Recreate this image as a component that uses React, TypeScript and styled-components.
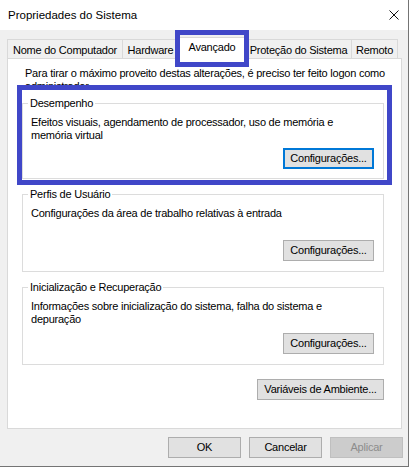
import React from 'react';
import styled, { createGlobalStyle, css } from 'styled-components';

const Global = createGlobalStyle`
  html, body { margin: 0; padding: 0; background: #ffffff; }
  body { font-family: "Liberation Sans", Arial, sans-serif; }
`;

const Window = styled.div`
  position: relative;
  box-sizing: border-box;
  width: 409px;
  height: 467px;
  border-right: 1px solid #747474;
  border-bottom: 1px solid #747474;
  background: #f0f0f0;
  display: flex;
  flex-direction: column;
  font-family: "Liberation Sans", Arial, sans-serif;
  font-size: 11px;
  letter-spacing: -0.23px;
  line-height: 13px;
  color: #000;
`;

const TitleBar = styled.div`
  box-sizing: border-box;
  height: 30px;
  flex: none;
  background: #ffffff;
  display: flex;
  align-items: center;
  justify-content: space-between;
  padding: 0 9px 0 8px;
  font-size: 11.5px;
  letter-spacing: 0;
`;

const CloseIcon = () => (
  <svg width="10" height="10" viewBox="0 0 10 10" style={{ display: 'block' }}>
    <path d="M0.5 0.5 L9.5 9.5 M9.5 0.5 L0.5 9.5" stroke="#111" strokeWidth="1" fill="none" />
  </svg>
);

const Body = styled.div`
  flex: 1;
  display: flex;
  flex-direction: column;
  padding: 9px 0 0 7px;
`;

const TabStrip = styled.div`
  display: flex;
  align-items: flex-end;
  height: 19px;
  position: relative;
  z-index: 1;
`;

const Tab = styled.div<{ $w: number; $first?: boolean; $active?: boolean }>`
  box-sizing: border-box;
  width: ${p => p.$w}px;
  height: 19px;
  margin-left: ${p => (p.$first ? 0 : -1)}px;
  border: 1px solid #d9d9d9;
  border-bottom: none;
  background: #f0f0f0;
  display: flex;
  align-items: center;
  justify-content: center;
  padding-top: 2px;
  white-space: nowrap;
  ${p =>
    p.$active &&
    css`
      width: ${p.$w + 4}px;
      height: 22px;
      margin-left: -3px;
      margin-right: -2px;
      margin-bottom: -1px;
      background: #ffffff;
      padding-top: 0;
      padding-bottom: 3px;
      position: relative;
      z-index: 2;
    `}
`;

const Panel = styled.div`
  box-sizing: border-box;
  width: 395px;
  height: 371px;
  border: 1px solid #d9d9d9;
  background: #ffffff;
  display: flex;
  flex-direction: column;
`;

const Intro = styled.p`
  margin: 0;
  padding: 8px 10px 0 17px;
  height: 26px;
`;

const Groups = styled.div`
  display: flex;
  flex-direction: column;
  gap: 9px;
  padding: 4px 17px 0 14px;
`;

const GroupBox = styled.fieldset<{ $h: number }>`
  box-sizing: border-box;
  margin: 0;
  padding: 0;
  min-width: 0;
  height: ${p => p.$h}px;
  border: 1px solid #dcdcdc;
`;

const GroupTitle = styled.legend`
  margin-left: 5px;
  padding: 0 2px;
  line-height: 13px;
`;

const GroupContent = styled.div<{ $h: number; $pb: number }>`
  box-sizing: border-box;
  height: ${p => p.$h}px;
  display: flex;
  flex-direction: column;
  justify-content: space-between;
  padding: 6px 9px ${p => p.$pb}px 8px;
`;

const GroupText = styled.p`
  margin: 0;
`;

const ButtonRow = styled.div`
  display: flex;
  justify-content: flex-end;
`;

const Button = styled.button<{ $w: number; $focused?: boolean }>`
  box-sizing: border-box;
  width: ${p => p.$w}px;
  height: 21px;
  margin: 0;
  padding: 0;
  background: #e1e1e1;
  border: 1px solid #adadad;
  font-family: inherit;
  font-size: 11px;
  letter-spacing: -0.23px;
  line-height: 13px;
  color: #000;
  white-space: nowrap;
  ${p =>
    p.$focused &&
    css`
      border: 2px solid #0078d7;
    `}
  &:disabled {
    background: #cccccc;
    border-color: #bfbfbf;
    color: #8c8c8c;
  }
`;

const EnvRow = styled.div`
  display: flex;
  justify-content: flex-end;
  margin-top: 5px;
`;

const Footer = styled.div`
  display: flex;
  justify-content: flex-end;
  gap: 8px;
  padding: 8px 5px 0 0;
`;

const Highlight = styled.div`
  position: absolute;
  box-sizing: border-box;
  border: 5px solid #4047c8;
  pointer-events: none;
  z-index: 5;
`;

type Group = { title: string; text: string; h: number; pb: number };

const groups: Group[] = [
  {
    title: 'Desempenho',
    text: 'Efeitos visuais, agendamento de processador, uso de memória e memória virtual',
    h: 82,
    pb: 9,
  },
  {
    title: 'Perfis de Usuário',
    text: 'Configurações da área de trabalho relativas à entrada',
    h: 84,
    pb: 10,
  },
  {
    title: 'Inicialização e Recuperação',
    text: 'Informações sobre inicialização do sistema, falha do sistema e depuração',
    h: 84,
    pb: 10,
  },
];

const tabs = [
  { label: 'Nome do Computador', w: 116 },
  { label: 'Hardware', w: 57 },
  { label: 'Avançado', w: 68, active: true },
  { label: 'Proteção do Sistema', w: 107 },
  { label: 'Remoto', w: 47 },
];

export default function App() {
  return (
    <>
      <Global />
      <Window>
        <TitleBar>
          <span>Propriedades do Sistema</span>
          <CloseIcon />
        </TitleBar>
        <Body>
          <TabStrip>
            {tabs.map((t, i) => (
              <Tab key={t.label} $w={t.w} $first={i === 0} $active={t.active}>
                {t.label}
              </Tab>
            ))}
          </TabStrip>
          <Panel>
            <Intro>
              Para tirar o máximo proveito destas alterações, é preciso ter feito logon como administrador
            </Intro>
            <Groups>
              {groups.map((g, i) => (
                <GroupBox key={g.title} $h={g.h}>
                  <GroupTitle>{g.title}</GroupTitle>
                  <GroupContent $h={g.h - 14} $pb={g.pb}>
                    <GroupText>{g.text}</GroupText>
                    <ButtonRow>
                      <Button $w={91} $focused={i === 0}>
                        Configurações...
                      </Button>
                    </ButtonRow>
                  </GroupContent>
                </GroupBox>
              ))}
              <EnvRow>
                <Button $w={127}>Variáveis de Ambiente...</Button>
              </EnvRow>
            </Groups>
          </Panel>
          <Footer>
            <Button $w={73}>OK</Button>
            <Button $w={73}>Cancelar</Button>
            <Button $w={73} disabled>
              Aplicar
            </Button>
          </Footer>
        </Body>
        <Highlight style={{ left: 175, top: 30, width: 74, height: 37 }} />
        <Highlight style={{ left: 17, top: 85, width: 375, height: 100 }} />
      </Window>
    </>
  );
}
